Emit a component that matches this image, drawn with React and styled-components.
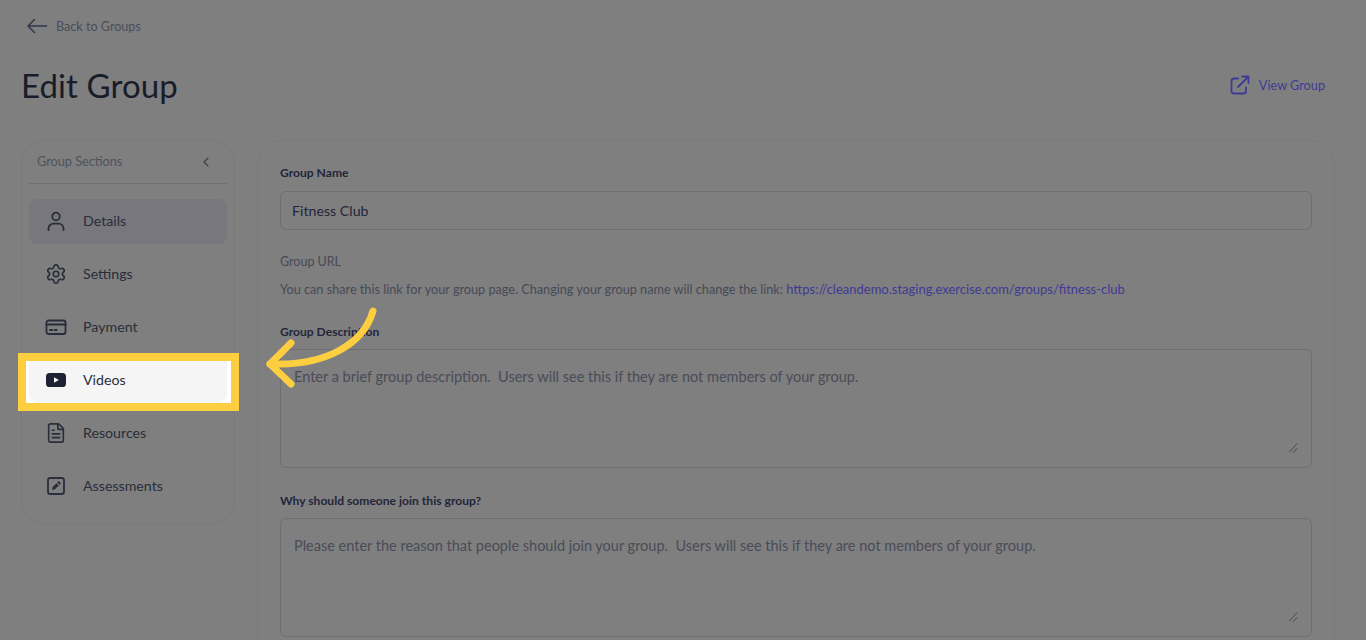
import React from "react";
import styled, { createGlobalStyle } from "styled-components";
import { ChevronLeft, FileText, Settings } from "lucide-react";

const Global = createGlobalStyle`
  html, body { margin: 0; height: 640px; overflow: hidden; background: #7f7f7f; }
  * { box-sizing: border-box; }
  body { font-family: "Lato", "Liberation Sans", sans-serif; color: #1d2130; }
`;

const sections = [
  { label: "Details", icon: <UserIcon />, selected: true },
  { label: "Settings", icon: <Settings size={22} strokeWidth={1.8} /> },
  { label: "Payment", icon: <CardIcon /> },
  { label: "Videos", icon: <VideoIcon />, highlighted: true },
  { label: "Resources", icon: <FileText size={22} strokeWidth={1.8} /> },
  { label: "Assessments", icon: <PencilIcon /> },
];

function UserIcon() {
  return (
    <svg width="22" height="22" viewBox="0 0 22 22" fill="none" stroke="currentColor" strokeWidth="1.8" strokeLinecap="round">
      <circle cx="11" cy="6.5" r="3.8" />
      <path d="M3.5 20v-1.5c0-3 2.500-4.800 5-4.800h5c2.500 0 5 1.800 5 4.800V20" />
    </svg>
  );
}

function CardIcon() {
  return (
    <svg width="22" height="22" viewBox="0 0 22 22" fill="none" stroke="currentColor" strokeWidth="1.8" strokeLinecap="round">
      <rect x="1.500" y="4.500" width="19" height="13.500" rx="2" />
      <path d="M1.500 8.500h19" strokeWidth="2.200" />
      <path d="M5 14h2.200M9.500 14h2.200" />
    </svg>
  );
}

function VideoIcon() {
  return (
    <svg width="22" height="22" viewBox="0 0 22 22">
      <rect x="1" y="4" width="20" height="14" rx="3.600" fill="#1d2235" />
      <path d="M9 8.200l4.800 2.800L9 13.800z" fill="#f5f5f5" />
    </svg>
  );
}

function PencilIcon() {
  return (
    <svg width="22" height="22" viewBox="0 0 22 22" fill="none">
      <rect x="3" y="3" width="16" height="16" rx="2.200" stroke="currentColor" strokeWidth="1.800" />
      <path d="M7 15l.7-3 3.800-3.800 2.300 2.300-3.800 3.800z" fill="currentColor" />
      <path d="M12.300 7.400l.8-.8a1 1 0 0 1 1.400 0l.9.900a1 1 0 0 1 0 1.400l-.8.800z" fill="currentColor" />
    </svg>
  );
}

function Grip() {
  return (
    <GripMark width="9" height="10" viewBox="0 0 9 10" stroke="#4c4c4c" strokeWidth="1" strokeLinecap="round">
      <path d="M.5 9L8 .7M4.500 9.500L8 5.500" />
    </GripMark>
  );
}

function App() {
  return (
    <Page>
      <Global />
      <BackLink>
        <svg width="22" height="16" viewBox="0 0 22 16" fill="none" stroke="#32364a" strokeWidth="1.5" strokeLinecap="round" strokeLinejoin="round">
          <path d="M20.500 8H2M8.500 1.500L2 8l6.500 6.500" />
        </svg>
        Back to Groups
      </BackLink>
      <Header>
        <Title>Edit Group</Title>
        <ViewLink>
          <svg width="20" height="20" viewBox="0 0 20 20" fill="none" stroke="currentColor" strokeWidth="1.800" strokeLinecap="round" strokeLinejoin="round">
            <path d="M8 3.500H4a2.500 2.500 0 0 0-2.500 2.500V16A2.500 2.500 0 0 0 4 18.500h9.500A2.500 2.500 0 0 0 16 16v-3.500" />
            <path d="M8 12L18.500 1.500M12 1.500h6.500V8" />
          </svg>
          View Group
        </ViewLink>
      </Header>
      <Columns>
        <Sidebar>
          <SidebarHead>
            Group Sections
            <ChevronLeft size={16} strokeWidth={1.7} color="#3b3f4e" />
          </SidebarHead>
          <SectionList>
            {sections.map((s) => (
              <SectionRow key={s.label} $selected={s.selected} $highlighted={s.highlighted}>
                {s.icon}
                <span>{s.label}</span>
              </SectionRow>
            ))}
          </SectionList>
        </Sidebar>
        <FormCard>
          <Label>Group Name</Label>
          <NameInput defaultValue="Fitness Club" />
          <UrlLabel>Group URL</UrlLabel>
          <Hint>
            You can share this link for your group page. Changing your group name will change the link:{" "}
            <UrlLink>https://cleandemo.staging.exercise.com/groups/fitness-club</UrlLink>
          </Hint>
          <Label>Group Description</Label>
          <TextBoxWrap>
            <TextBox placeholder="Enter a brief group description.  Users will see this if they are not members of your group." />
            <Grip />
          </TextBoxWrap>
          <Label>Why should someone join this group?</Label>
          <TextBoxWrap>
            <TextBox placeholder="Please enter the reason that people should join your group.  Users will see this if they are not members of your group." />
            <Grip />
          </TextBoxWrap>
        </FormCard>
      </Columns>
      <Arrow width="120" height="90" viewBox="0 0 120 90" fill="none" stroke="#fdcf40" strokeWidth="7" strokeLinecap="round" strokeLinejoin="round">
        <path d="M113 11C103 45 65 66 10 64" />
        <path d="M31 43L10 64 31 84" />
      </Arrow>
    </Page>
  );
}

const Page = styled.div`
  position: relative;
  height: 640px;
  padding: 18px 31px 0 21px;
  overflow: hidden;
`;

const BackLink = styled.div`
  display: flex;
  align-items: center;
  gap: 8px;
  height: 16px;
  padding-left: 5px;
  font-size: 12.600px;
  color: #4a4d5c;
`;

const Header = styled.div`
  display: flex;
  align-items: center;
  justify-content: space-between;
  height: 40px;
  margin-top: 31px;
`;

const Title = styled.h1`
  margin: 0;
  font-size: 33px;
  font-weight: 400;
  letter-spacing: 0.1px;
  color: #181c2a;
`;

const ViewLink = styled.div`
  display: flex;
  align-items: center;
  gap: 9px;
  padding-right: 10px;
  font-size: 12.700px;
  color: #3f3a96;

  svg {
    margin-bottom: 1px;
  }
`;

const Columns = styled.div`
  display: flex;
  gap: 22px;
  margin-top: 35px;
  align-items: flex-start;
`;

const Sidebar = styled.aside`
  flex: 0 0 214px;
  height: 384px;
  padding: 0 7px;
  border: 1px solid #7a7a7a;
  border-radius: 24px;
`;

const SidebarHead = styled.div`
  display: flex;
  align-items: center;
  justify-content: space-between;
  height: 43px;
  padding: 0 13px 3px 8px;
  border-bottom: 1px solid #717171;
  font-size: 12.700px;
  color: #4f5260;

  svg {
    margin-top: 2px;
  }
`;

const SectionList = styled.div`
  display: flex;
  flex-direction: column;
  gap: 8px;
  margin-top: 15px;
`;

const SectionRow = styled.div`
  position: relative;
  display: flex;
  align-items: center;
  gap: 16px;
  height: 45px;
  padding: 0 0 2px 16px;
  border-radius: 8px;
  font-size: 14.200px;
  color: #2a2d3a;
  background: ${(p) => (p.$selected ? "#77777d" : "transparent")};

  svg, span { position: relative; z-index: 1; }

  ${(p) =>
    p.$highlighted &&
    `
    &::before {
      content: "";
      position: absolute;
      inset: -5px -12px -8px -11px;
      background: #fff;
      border: 8px solid #fdcf40;
    }
    &::after {
      content: "";
      position: absolute;
      inset: 3px 0 1px 0;
      border-radius: 0 0 8px 8px;
      background: #f5f5f5;
    }
  `}
`;

const FormCard = styled.main`
  flex: 1;
  height: 600px;
  padding: 23px 22px 0;
  border: 1px solid #7a7a7a;
  border-radius: 24px;
`;

const Label = styled.div`
  height: 18px;
  font-size: 12.100px;
  font-weight: 700;
  line-height: 18px;
  color: #23263a;
`;

const NameInput = styled.input`
  display: block;
  width: 100%;
  height: 39px;
  margin-top: 9px;
  padding: 0 11px;
  background: transparent;
  border: 1px solid #6f6f6f;
  border-radius: 6px;
  font: 14.200px "Lato", "Liberation Sans", sans-serif;
  color: #23263a;
  outline: none;
`;

const UrlLabel = styled.div`
  margin-top: 24px;
  font-size: 12.500px;
  line-height: 16px;
  color: #474a58;
`;

const Hint = styled.div`
  margin-top: 11px;
  margin-bottom: 26px;
  font-size: 12.680px;
  line-height: 16px;
  color: #474a58;
`;

const UrlLink = styled.span`
  font-size: 13px;
  color: #3f3a96;
`;

const TextBoxWrap = styled.div`
  position: relative;
  margin-top: 8px;
  margin-bottom: 24px;
`;

const TextBox = styled.textarea`
  display: block;
  width: 100%;
  height: 119px;
  padding: 18px 13px;
  background: transparent;
  border: 1px solid #6f6f6f;
  border-radius: 6px;
  font: 14.500px "Lato", "Liberation Sans", sans-serif;
  resize: none;
  outline: none;

  &::placeholder {
    color: #4a4c58;
    opacity: 1;
  }
`;

const GripMark = styled.svg`
  position: absolute;
  right: 14px;
  bottom: 15px;
`;

const Arrow = styled.svg`
  position: absolute;
  left: 260px;
  top: 300px;
`;

export default App;
